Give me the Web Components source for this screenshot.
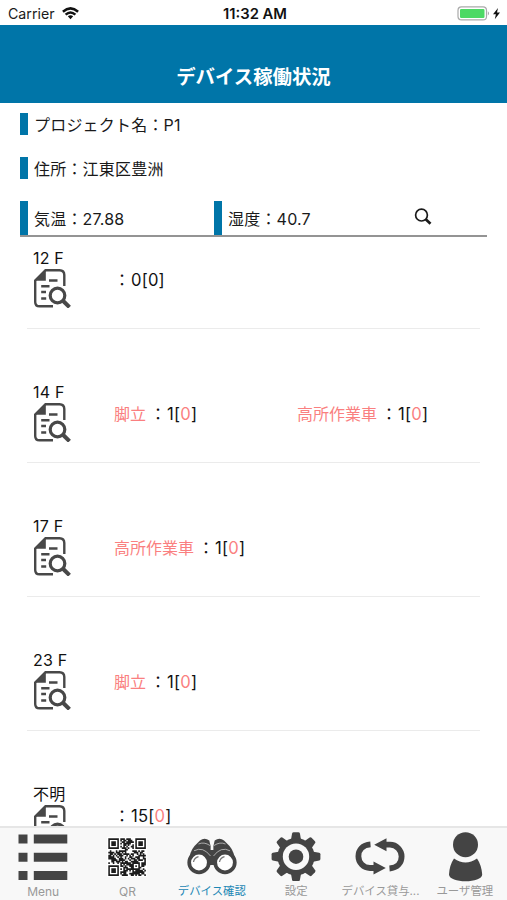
<!DOCTYPE html>
<html lang="ja">
<head>
<meta charset="utf-8">
<title>デバイス稼働状況</title>
<style>
    html, body {
        margin: 0;
        height: 100%;
        overflow: hidden;
        background: #fff;
        font-family: Inter, "Noto Sans CJK JP", sans-serif;
        font-size: 16px;
        color: #1a1a1a;
    }
</style>
</head>
<body>
<app-screen>
    <status-bar slot="top" carrier="Carrier" time="11:32 AM"></status-bar>
    <nav-header slot="top">デバイス稼働状況</nav-header>

    <project-info>
        <info-field>プロジェクト名：P1</info-field>
        <info-field>住所：江東区豊洲</info-field>
        <info-field slot="sensor">気温：27.88</info-field>
        <info-field slot="sensor">湿度：40.7</info-field>
    </project-info>

    <floor-row name="12 F">
        <device-count total="0" active="0"></device-count>
    </floor-row>
    <floor-row name="14 F">
        <device-count name="脚立" total="1" active="0"></device-count>
        <device-count name="高所作業車" total="1" active="0"></device-count>
    </floor-row>
    <floor-row name="17 F">
        <device-count name="高所作業車" total="1" active="0"></device-count>
    </floor-row>
    <floor-row name="23 F">
        <device-count name="脚立" total="1" active="0"></device-count>
    </floor-row>
    <floor-row name="不明">
        <device-count total="15" active="0" alert></device-count>
    </floor-row>

    <tab-bar slot="bottom">
        <tab-item icon="menu">Menu</tab-item>
        <tab-item icon="qr">QR</tab-item>
        <tab-item icon="binoculars" selected>デバイス確認</tab-item>
        <tab-item icon="gear">設定</tab-item>
        <tab-item icon="swap">デバイス貸与...</tab-item>
        <tab-item icon="user">ユーザ管理</tab-item>
    </tab-bar>
</app-screen>

<script>
// modules of the QR icon, 25 x 25
function qrPath() {
    const n = 25;
    let seed = 41;
    let d = '';
    const finder = (x, y) => {
        for (const [fx, fy] of [[0, 0], [n - 7, 0], [0, n - 7]]) {
            const a = x - fx;
            const b = y - fy;
            if (a >= -1 && a <= 7 && b >= -1 && b <= 7) {
                if (a < 0 || b < 0 || a > 6 || b > 6) return 0;
                const ring = Math.max(Math.abs(a - 3), Math.abs(b - 3));
                return ring === 2 ? 0 : 1;
            }
        }
        const ring = Math.max(Math.abs(x - 18), Math.abs(y - 18));
        if (ring <= 2) return ring === 1 ? 0 : 1;
        return null;
    };
    for (let y = 0; y < n; y++) {
        for (let x = 0; x < n; x++) {
            seed = (seed * 1103515245 + 12345) % 2147483648;
            const f = finder(x, y);
            const on = f === null ? (seed >> 16) % 100 < 60 : f;
            if (on) d += `M${x} ${y}h1.05v1.05h-1.05z`;
        }
    }
    return d;
}

function gearTeeth() {
    let s = '';
    for (let i = 0; i < 8; i++) {
        s += `<path d="M-5.2 -16 L-3.9 -23.2 Q-3.6 -24.4 -2.4 -24.4 H2.4 Q3.6 -24.4 3.9 -23.2 L5.2 -16Z" transform="rotate(${i * 45})"/>`;
    }
    return s;
}

const icons = {
    menu: `<svg width="50" height="50" viewBox="0 0 50 50" fill="#444">
        <path d="M.5 2.5h9v9h-9zM15.800 2.500h33.500v9H15.800zM.5 20.700h9v9h-9zM15.800 20.700h33.500v9H15.800zM.5 39h9v9h-9zM15.800 39h33.500v9H15.800z"/></svg>`,
    qr: `<svg width="50" height="50" viewBox="0 0 50 50">
        <path fill="#fff" d="M5 5h40v40H5z"/>
        <path fill="#1c1c1c" transform="translate(6.300 6.300) scale(1.500)" d="${qrPath()}"/></svg>`,
    binoculars: `<svg width="50" height="50" viewBox="0 0 50 50">
        <g fill="#444">
            <path d="M13 8.500Q17.500 5 22.300 8.500L23.600 14V32H17L1.500 30Q3 19 7.500 14Z"/>
            <path d="M37 8.500Q32.500 5 27.700 8.500L26.400 14V32H33L48.500 30Q47 19 42.500 14Z"/>
            <path d="M21 18h8v15h-8z"/>
        </g>
        <g fill="none" stroke="#d8d8d8" stroke-width=".7">
            <path d="M11.500 12Q17 9.500 23 13.500M38.500 12Q33 9.500 27 13.500"/>
            <path d="M7 18.800Q16 14 23.500 24M43 18.800Q34 14 26.500 24"/>
        </g>
        <g fill="#fff" stroke="#444" stroke-width="3.700">
            <circle cx="12" cy="30.500" r="9.800"/><circle cx="38" cy="30.500" r="9.800"/>
        </g>
        <path d="M6.500 30q.8-4.300 5-5.300M32.500 30q.8-4.300 5-5.300" fill="none" stroke="#777" stroke-width="1.300"/></svg>`,
    gear: `<svg width="50" height="50" viewBox="0 0 50 50">
        <g transform="translate(25 24.700)" fill="#444">${gearTeeth()}
            <circle r="18.600"/><circle r="13.200" fill="#f8f8f8"/><circle r="7.300"/>
        </g></svg>`,
    swap: `<svg width="50" height="50" viewBox="0 0 50 50">
        <g fill="none" stroke="#444" stroke-width="5.800">
            <path d="M15.500 12.300C7.500 12.900 3.400 18 3.400 24.300S8.500 36 15 36H20"/>
            <path d="M34.500 36.500C42.500 35.900 46.600 30.700 46.600 24.400S41.500 12.700 35 12.700H30"/>
        </g>
        <path fill="#444" d="M19.200 12.700 31.500 6.200V19.200ZM30.800 36 18.500 42.500V29.500Z"/></svg>`,
    user: `<svg width="50" height="50" viewBox="0 0 50 50" fill="#444">
        <circle cx="25.500" cy="12.700" r="12.500"/>
        <path d="M14 26.500Q25.500 34.500 37 26.500Q41.500 33 42.200 42.500C42.200 51.500 9 51.500 9 42.500Q9.500 33 14 26.500Z"/></svg>`,
};


class AppScreen extends HTMLElement {
    connectedCallback() {
        this.attachShadow({ mode: 'open' }).innerHTML = `
            <style>
                :host {
                    display: flex;
                    flex-direction: column;
                    height: 100vh;
                    overflow: hidden;
                }
                main {
                    flex: 1;
                    min-height: 0;
                    overflow: hidden;
                }
            </style>
            <slot name="top"></slot>
            <main><slot></slot></main>
            <slot name="bottom"></slot>
        `;
    }
}
customElements.define('app-screen', AppScreen);


class StatusBar extends HTMLElement {
    connectedCallback() {
        this.attachShadow({ mode: 'open' }).innerHTML = `
            <style>
                :host {
                    display: grid;
                    grid-template-columns: 1fr auto 1fr;
                    align-items: center;
                    height: 25px;
                    padding: 2px 5px 0 8px;
                    box-sizing: border-box;
                    font-size: 14px;
                }
                .left, .right { display: flex; align-items: center; }
                .left { gap: 7px; font-size: 14.2px; }
                .right { justify-content: flex-end; }
                .time { font-size: 14.8px; font-weight: 600; color: #111; }
                svg { display: block; }
            </style>
            <div class="left">
                <span>${this.getAttribute('carrier')}</span>
                <svg width="17" height="13" viewBox="0 0 17 13" fill="none" stroke="#111" stroke-width="2.500">
                    <path d="M.9 4.700Q8.500-2 16.100 4.700M3.600 7.600Q8.500 3.300 13.400 7.600"/>
                    <path d="M5.800 9.300Q8.500 7.200 11.200 9.300L8.500 12.200Z" fill="#111" stroke="none"/>
                </svg>
            </div>
            <span class="time">${this.getAttribute('time')}</span>
            <div class="right">
                <svg width="45" height="15" viewBox="0 0 45 15">
                    <rect x="1" y=".9" width="28.500" height="13" rx="3.500" fill="#fff" stroke="#aaa" stroke-width="1.200"/>
                    <rect x="3" y="2.900" width="24.500" height="9" rx="1.200" fill="#4cd964"/>
                    <path d="M30.900 5.200q2 2.200 0 4.400z" fill="#999"/>
                    <path d="M41 2 36 8.300h2.900L37.800 13.300 43 6.500h-3z" fill="#111"/>
                </svg>
            </div>
        `;
    }
}
customElements.define('status-bar', StatusBar);


class NavHeader extends HTMLElement {
    connectedCallback() {
        this.attachShadow({ mode: 'open' }).innerHTML = `
            <style>
                :host {
                    display: flex;
                    align-items: flex-end;
                    justify-content: center;
                    height: 78px;
                    padding-bottom: 12px;
                    box-sizing: border-box;
                    background: #0075a8;
                    color: #fff;
                    font-size: 19.4px;
                    font-weight: 600;
                    line-height: 28px;
                }
            </style>
            <slot></slot>
        `;
    }
}
customElements.define('nav-header', NavHeader);


class ProjectInfo extends HTMLElement {
    connectedCallback() {
        this.attachShadow({ mode: 'open' }).innerHTML = `
            <style>
                :host {
                    display: flex;
                    flex-direction: column;
                    gap: 22px;
                    padding: 10px 20px 11px;
                }
                .sensors {
                    display: grid;
                    grid-template-columns: 194px 194px 1fr;
                    align-items: stretch;
                    height: 34px;
                    border-bottom: 2px solid #949494;
                }
                svg { margin: 7px 0 0 6px; }
            </style>
            <slot></slot>
            <div class="sensors">
                <slot name="sensor"></slot>
                <svg width="18" height="18" viewBox="0 0 18 18" fill="none" stroke="#1a1a1a">
                    <circle cx="7.500" cy="7.100" r="5.900" stroke-width="1.700"/>
                    <path d="m11.700 11.300 4.800 4.500" stroke-width="2.700"/>
                </svg>
            </div>
        `;
    }
}
customElements.define('project-info', ProjectInfo);


class InfoField extends HTMLElement {
    connectedCallback() {
        this.attachShadow({ mode: 'open' }).innerHTML = `
            <style>
                :host {
                    display: flex;
                    align-items: center;
                    height: 22px;
                    box-sizing: border-box;
                    border-left: 8px solid #0075a8;
                    padding: 2px 0 0 6px;
                    letter-spacing: .2px;
                    line-height: 20px;
                }
                :host([slot="sensor"]) { height: auto; }
            </style>
            <slot></slot>
        `;
    }
}
customElements.define('info-field', InfoField);


class FloorRow extends HTMLElement {
    connectedCallback() {
        this.attachShadow({ mode: 'open' }).innerHTML = `
            <style>
                :host {
                    display: grid;
                    grid-template-columns: 81px 1fr;
                    height: 81px;
                    margin: 0 27px 53px;
                    padding-left: 6px;
                    border-bottom: 1px solid #ebebeb;
                    box-sizing: border-box;
                }
                .name { line-height: 20px; letter-spacing: .2px; color: #111; }
                svg { display: block; margin: 1px 0 0 1px; }
                .devices {
                    display: grid;
                    grid-template-columns: 183px 1fr;
                    align-items: center;
                    height: 64px;
                }
            </style>
            <div>
                <div class="name">${this.getAttribute('name')}</div>
                <svg width="37" height="39" viewBox="0 0 37 39" fill="none" stroke="#484848" stroke-width="2.400">
                    <path d="M30.300 17V6Q30.300 1.200 25.500 1.200H11.500L1.200 11.500V33Q1.200 37.300 5.500 37.300H19"/>
                    <path d="M11.800 1.500V11.800H1.500Z" fill="#484848" stroke="none"/>
                    <path d="M15 11.500h8.500M7.200 17.300h8.300M7.200 23h4.800M7.200 29.500h5"/>
                    <circle cx="23.500" cy="26.500" r="7.300" stroke-width="3.200"/>
                    <path d="m29.200 32 6.300 6.200" stroke-width="4"/>
                </svg>
            </div>
            <div class="devices"><slot></slot></div>
        `;
    }
}
customElements.define('floor-row', FloorRow);


class DeviceCount extends HTMLElement {
    connectedCallback() {
        const name = this.getAttribute('name');
        // the active number is red on every device that has a name or an alert
        const cls = name || this.hasAttribute('alert') ? 'red' : '';

        this.attachShadow({ mode: 'open' }).innerHTML = `
            <style>
                :host {
                    display: flex;
                    line-height: 22px;
                    white-space: nowrap;
                    color: #111;
                }
                .name { margin-right: 4px; }
                .colon { margin-right: 1px; }
                .count { font-size: 16.6px; letter-spacing: .2px; }
                .name, .red { color: #fa7f80; }
            </style>
            ${name ? `<span class="name">${name}</span>` : ''}
            <span class="colon">：</span>
            <span class="count">${this.getAttribute('total')}[<span class="${cls}">${this.getAttribute('active')}</span>]</span>
        `;
    }
}
customElements.define('device-count', DeviceCount);


class TabBar extends HTMLElement {
    connectedCallback() {
        this.attachShadow({ mode: 'open' }).innerHTML = `
            <style>
                :host {
                    display: grid;
                    grid-template-columns: repeat(6, 1fr);
                    flex: none;
                    height: 74px;
                    padding-left: 1px;
                    box-sizing: border-box;
                    border-top: 2px solid #e6e6e6;
                    background: #f8f8f8;
                }
            </style>
            <slot></slot>
        `;
    }
}
customElements.define('tab-bar', TabBar);


class TabItem extends HTMLElement {
    connectedCallback() {
        this.attachShadow({ mode: 'open' }).innerHTML = `
            <style>
                :host {
                    display: flex;
                    flex-direction: column;
                    align-items: center;
                    padding-top: 4px;
                    font-size: 11.4px;
                    line-height: 17px;
                    white-space: nowrap;
                    color: #999;
                }
                :host([selected]) { color: #1c87b5; }
                svg { display: block; }
                .label { margin-top: 1px; }
                .latin { font-size: 12px; }
            </style>
            ${icons[this.getAttribute('icon')]}
            <div class="label ${/^\w+$/.test(this.textContent) ? 'latin' : ''}"><slot></slot></div>
        `;
    }
}
customElements.define('tab-item', TabItem);
</script>
</body>
</html>
